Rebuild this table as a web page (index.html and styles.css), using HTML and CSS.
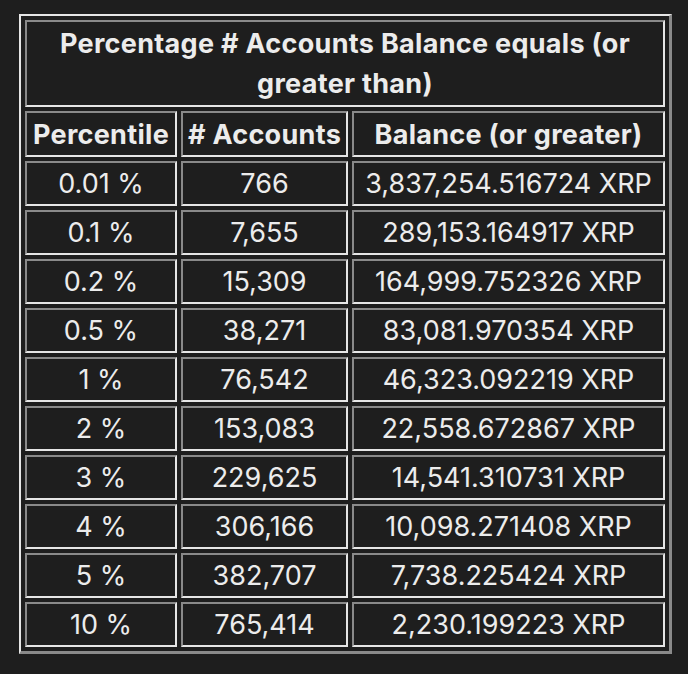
FILE: index.html
```html
<!DOCTYPE html>
<html>
<head>
<meta charset="utf-8">
<link rel="stylesheet" href="styles.css">
</head>
<body>
<div class="wrap">
<table class="stats">
  <colgroup><col class="c1"><col class="c2"><col class="c3"></colgroup>
  <thead>
    <tr><th colspan="3" class="title">Percentage # Accounts Balance equals (or greater than)</th></tr>
    <tr><th>Percentile</th><th># Accounts</th><th>Balance (or greater)</th></tr>
  </thead>
  <tbody>
    <tr><td>0.01 %</td><td>766</td><td>3,837,254.516724 XRP</td></tr>
    <tr><td>0.1 %</td><td>7,655</td><td>289,153.164917 XRP</td></tr>
    <tr><td>0.2 %</td><td>15,309</td><td>164,999.752326 XRP</td></tr>
    <tr><td>0.5 %</td><td>38,271</td><td>83,081.970354 XRP</td></tr>
    <tr><td>1 %</td><td>76,542</td><td>46,323.092219 XRP</td></tr>
    <tr><td>2 %</td><td>153,083</td><td>22,558.672867 XRP</td></tr>
    <tr><td>3 %</td><td>229,625</td><td>14,541.310731 XRP</td></tr>
    <tr><td>4 %</td><td>306,166</td><td>10,098.271408 XRP</td></tr>
    <tr><td>5 %</td><td>382,707</td><td>7,738.225424 XRP</td></tr>
    <tr><td>10 %</td><td>765,414</td><td>2,230.199223 XRP</td></tr>
  </tbody>
</table>
</div>
</body>
</html>
```
FILE: styles.css
```css
html, body {
  margin: 0;
  padding: 0;
  background: #1e1e1e;
}
.wrap {
  padding: 14px 0 0 19px;
}
.stats {
  table-layout: fixed;
  width: 653px;
  border-collapse: separate;
  border-spacing: 4px;
  border-style: solid;
  border-width: 2px 3px 3px 2px;
  border-color: #e6e6e6 #8a8a8a #8a8a8a #e6e6e6;
  font-family: Inter, "Noto Sans", sans-serif;
  color: #ececec;
}
.c1 { width: 152px; }
.c2 { width: 167px; }
.c3 { width: 313px; }
.stats th, .stats td {
  border-style: solid;
  border-width: 2px;
  border-color: #8a8a8a #e6e6e6 #e6e6e6 #8a8a8a;
  text-align: center;
  padding: 0;
  font-size: 27px;
  white-space: nowrap;
}
.stats th {
  font-weight: 700;
  height: 42px;
  letter-spacing: 0.3px;
}
.stats th.title {
  white-space: normal;
  height: 83px;
  line-height: 40px;
  padding: 0 20px;
}
.stats td {
  font-weight: 400;
  height: 41px;
  letter-spacing: 0;
}
```
